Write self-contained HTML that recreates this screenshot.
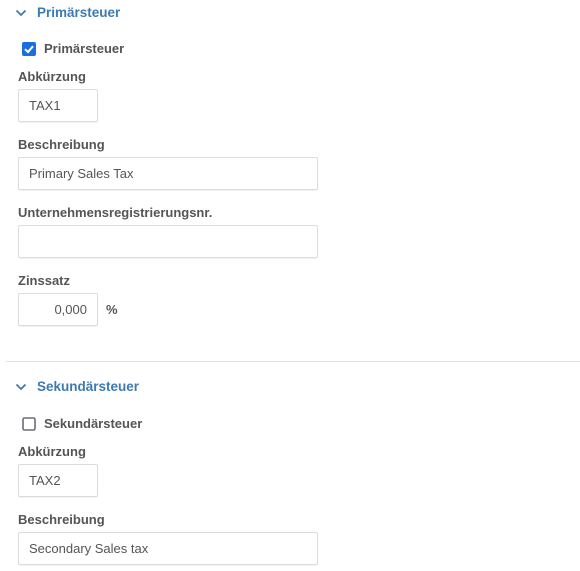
<!DOCTYPE html>
<html><head><meta charset="utf-8"><style>
*{margin:0;padding:0;box-sizing:border-box}
body{width:580px;height:571px;background:#fff;font-family:"Liberation Sans",sans-serif;position:relative;overflow:hidden;color:#555}
.a{position:absolute;white-space:nowrap}
.h{color:#3d7ab3;font-size:13.5px;font-weight:bold}
.l{font-size:13px;font-weight:bold;color:#555}
.i{position:absolute;border:1px solid #dcdcdc;border-radius:2px;height:33px;font-size:13px;color:#555;line-height:31px;padding-left:10px;box-shadow:0 1px 1px rgba(0,0,0,.06)}
</style></head><body>
<svg class="a" style="left:15px;top:8px" width="12" height="10" viewBox="0 0 12 10"><path d="M1.5 2.5 L6 7 L10.5 2.5" stroke="#3d7ab3" stroke-width="1.8" fill="none"/></svg>
<div class="a h" style="left:37px;top:5px">Primärsteuer</div>
<svg class="a" style="left:22px;top:42px" width="14" height="14"><rect x="0" y="0" width="14" height="14" rx="2" fill="#1a6fe0"/><path d="M3 7.2 L6 10 L11 4.2" stroke="#fff" stroke-width="2" fill="none"/></svg>
<div class="a l" style="left:44px;top:41px">Primärsteuer</div>
<div class="a l" style="left:18px;top:69px">Abkürzung</div>
<div class="i" style="left:18px;top:89px;width:80px">TAX1</div>
<div class="a l" style="left:18px;top:137px">Beschreibung</div>
<div class="i" style="left:18px;top:157px;width:300px">Primary Sales Tax</div>
<div class="a l" style="left:18px;top:205px">Unternehmensregistrierungsnr.</div>
<div class="i" style="left:18px;top:225px;width:300px"></div>
<div class="a l" style="left:18px;top:273px">Zinssatz</div>
<div class="i" style="left:18px;top:293px;width:80px;text-align:right;padding-right:10px">0,000</div>
<div class="a l" style="left:106px;top:302px">%</div>
<div class="a" style="left:6px;top:361px;width:574px;height:1px;background:#e3e3e3"></div>
<svg class="a" style="left:15px;top:382px" width="12" height="10" viewBox="0 0 12 10"><path d="M1.5 2.5 L6 7 L10.5 2.5" stroke="#3d7ab3" stroke-width="1.8" fill="none"/></svg>
<div class="a h" style="left:37px;top:379px">Sekundärsteuer</div>
<svg class="a" style="left:22px;top:417px" width="14" height="14"><rect x="1" y="1" width="12" height="12" rx="1.5" fill="#fff" stroke="#6b6b78" stroke-width="1.6"/></svg>
<div class="a l" style="left:44px;top:416px">Sekundärsteuer</div>
<div class="a l" style="left:18px;top:444px">Abkürzung</div>
<div class="i" style="left:18px;top:464px;width:80px">TAX2</div>
<div class="a l" style="left:18px;top:512px">Beschreibung</div>
<div class="i" style="left:18px;top:532px;width:300px">Secondary Sales tax</div>
</body></html>
